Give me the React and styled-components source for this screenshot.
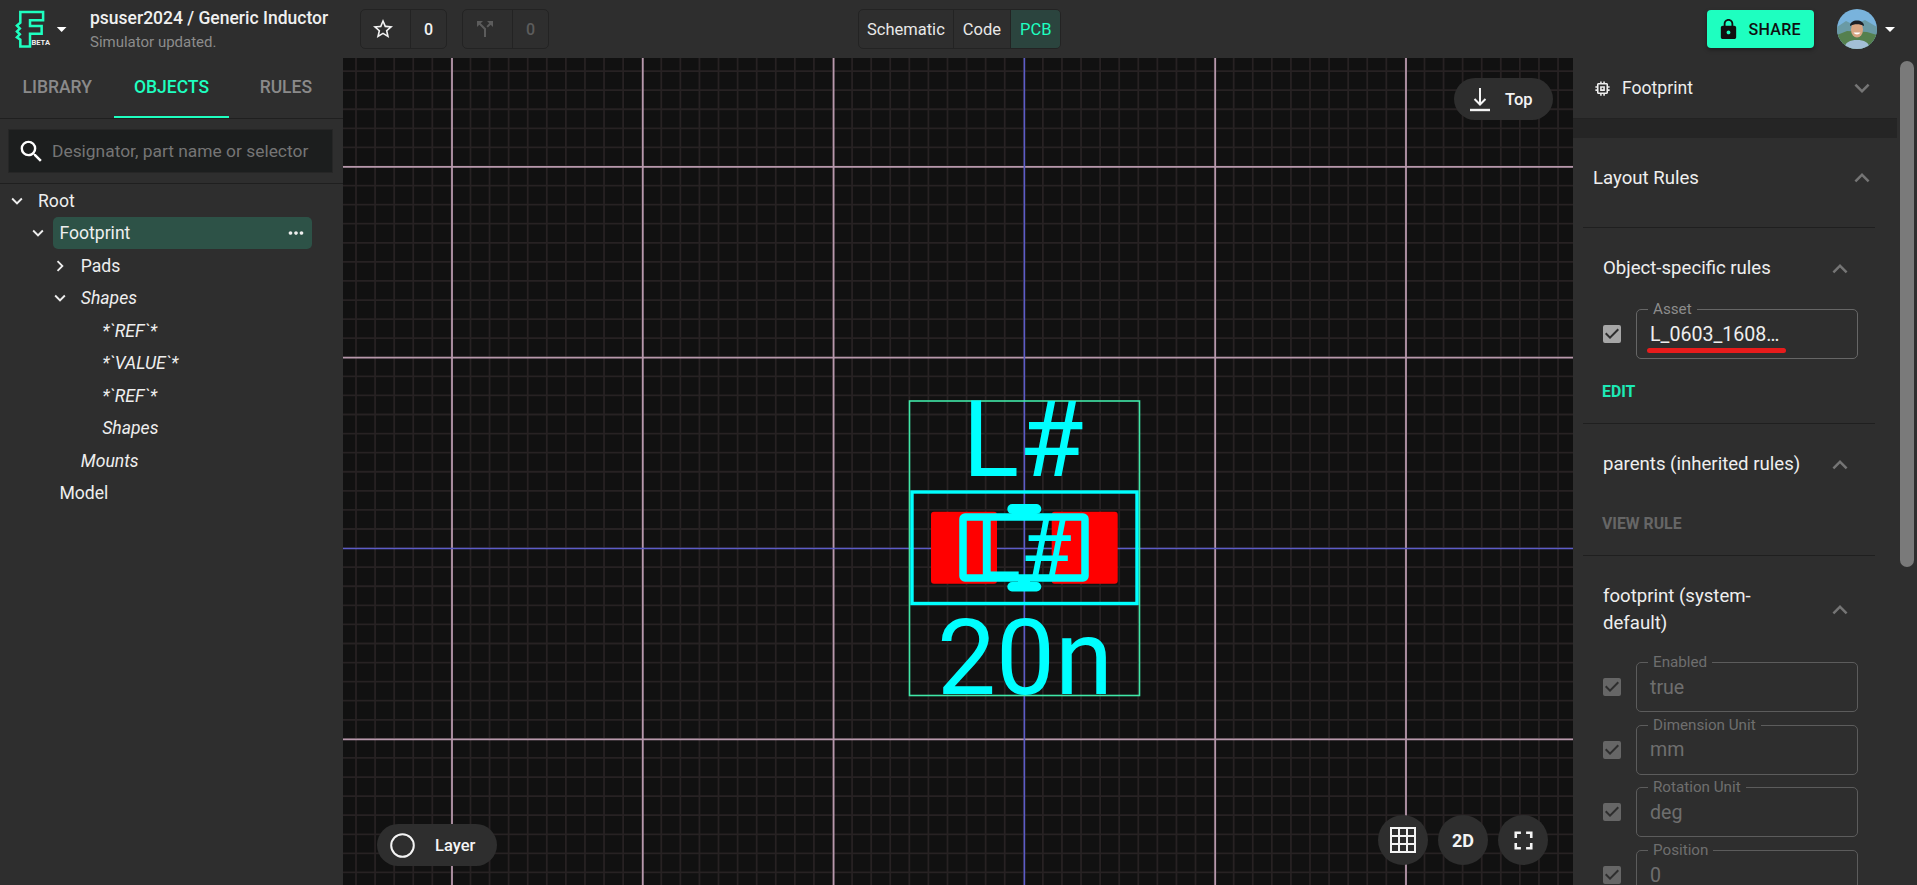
import React from 'react';
import styled, { createGlobalStyle } from 'styled-components';
import {
  MdArrowDropDown,
  MdCallSplit,
  MdCheckBox,
  MdChevronRight,
  MdExpandLess,
  MdExpandMore,
  MdFullscreen,
  MdLock,
  MdMemory,
  MdMoreHoriz,
  MdSearch,
  MdStarBorder,
} from 'react-icons/md';

const ACCENT = '#1effc0';
const PANEL = '#2e2e2e';
const LINE = '#1f1f1f';

const GlobalStyle = createGlobalStyle`
  html, body {
    margin: 0;
    height: 100%;
    background: ${PANEL};
    font-family: Roboto, "Liberation Sans", sans-serif;
    overflow: hidden;
  }
  * { box-sizing: border-box; }
`;

const Page = styled.div`
  width: 1917px;
  height: 885px;
  display: flex;
  flex-direction: column;
  overflow: hidden;
  color: #eee;
`;

/* top bar */
const Header = styled.header`
  height: 58px;
  flex: none;
  display: flex;
  align-items: center;
  background: ${PANEL};
  padding: 0 15.5px 0 15px;
`;
const LogoBox = styled.div`
  width: 58px;
  display: flex;
  align-items: center;
  color: #fff;
  svg + svg { margin-left: -4px; }
`;
const Titles = styled.div`
  width: 270px;
  margin-left: 17px;
  display: flex;
  flex-direction: column;
  gap: 4px;
`;
const Title = styled.div`
  font-size: 17.5px;
  font-weight: 500;
  line-height: 22px;
  color: #f0f0f0;
`;
const Subtitle = styled.div`
  font-size: 15px;
  line-height: 18px;
  color: #8c8c8c;
`;
const Counter = styled.div`
  width: 87px;
  height: 40px;
  margin-right: 15px;
  display: flex;
  border: 1px solid #232323;
  border-radius: 5px;
  color: ${p => (p.$off ? '#5c5c5c' : '#f2f2f2')};
`;
const CounterIcon = styled.div`
  width: 50px;
  display: flex;
  align-items: center;
  justify-content: center;
  padding-right: 5px;
  border-right: 1px solid #232323;
`;
const CounterValue = styled.div`
  flex: 1;
  display: flex;
  align-items: center;
  justify-content: center;
  font-size: 16px;
  font-weight: 500;
`;
const ViewSwitch = styled.div`
  height: 40px;
  margin-left: 294px;
  display: flex;
  border: 1px solid #232323;
  border-radius: 5px;
  overflow: hidden;
`;
const ViewTab = styled.div`
  display: flex;
  align-items: center;
  padding: 0 ${p => p.$pad}px;
  font-size: 16.5px;
  color: ${p => (p.$active ? ACCENT : '#e8e8e8')};
  background: ${p => (p.$active ? '#2b443e' : 'transparent')};
  & + & { border-left: 1px solid #232323; }
`;
const HeaderRight = styled.div`
  margin-left: auto;
  display: flex;
  align-items: center;
`;
const ShareButton = styled.button`
  width: 107px;
  height: 38px;
  display: flex;
  align-items: center;
  gap: 9px;
  padding: 0 0 0 10px;
  border: 0;
  border-radius: 4px;
  background: ${ACCENT};
  color: #101010;
  font: 500 16px Roboto, sans-serif;
  letter-spacing: 0.3px;
  box-shadow: 0 2px 4px rgba(0, 0, 0, 0.35);
`;
const AvatarBox = styled.div`
  width: 40px;
  height: 40px;
  margin-left: 23px;
  border-radius: 50%;
  overflow: hidden;
`;
const Caret = styled.div`
  display: flex;
  margin-left: 1px;
  color: #fff;
`;

/* main area */
const Main = styled.div`
  flex: 1;
  min-height: 0;
  display: flex;
`;

/* left panel */
const LeftPanel = styled.aside`
  width: 343px;
  flex: none;
  background: ${PANEL};
`;
const Tabs = styled.div`
  height: 61px;
  display: grid;
  grid-template-columns: repeat(3, 1fr);
  border-bottom: 1px solid ${LINE};
`;
const Tab = styled.div`
  display: flex;
  align-items: center;
  justify-content: center;
  height: 60px;
  font-size: 17.5px;
  font-weight: 500;
  color: ${p => (p.$active ? ACCENT : '#8a8a8a')};
  border-bottom: 2px solid ${p => (p.$active ? ACCENT : 'transparent')};
`;
const SearchWrap = styled.div`
  height: 65px;
  padding: 10px 10px 10px 8px;
  border-bottom: 1px solid ${LINE};
`;
const SearchBox = styled.div`
  height: 44px;
  display: flex;
  align-items: center;
  gap: 6px;
  padding-left: 8px;
  background: #1c1e1e;
  border: 1px solid #262626;
  color: #fff;
`;
const SearchText = styled.span`
  font-size: 17.4px;
  color: #757575;
`;
const Tree = styled.div`
  padding: 0.6px 31px 0 0;
`;
const TreeRow = styled.div`
  height: 32.5px;
  display: flex;
  align-items: center;
  padding-left: ${p => 6 + p.$depth * 21.4}px;
`;
const Toggle = styled.div`
  width: 22px;
  flex: none;
  margin-right: 4px;
  display: flex;
  color: #eee;
`;
const TreeLabel = styled.div`
  flex: 1;
  height: 32px;
  display: flex;
  align-items: center;
  justify-content: space-between;
  padding: 0 5px 0 6px;
  font-size: 17.6px;
  font-style: ${p => (p.$italic ? 'italic' : 'normal')};
  color: #eee;
  border-radius: 5px;
  background: ${p => (p.$selected ? '#2d5247' : 'transparent')};
`;

/* canvas */
const Canvas = styled.main`
  flex: 1;
  position: relative;
  overflow: hidden;
  background: #111;
`;
const Drawing = styled.svg`
  position: absolute;
  inset: 0;
  width: 100%;
  height: 100%;
`;
const FloatPill = styled.div`
  position: absolute;
  height: 42px;
  display: flex;
  align-items: center;
  border-radius: 21px;
  background: ${PANEL};
  font-size: 16.5px;
  font-weight: 500;
  color: #f4f4f4;
  left: ${p => p.$left}px;
  top: ${p => p.$top}px;
  width: ${p => p.$width}px;
  padding-left: ${p => p.$pad}px;
  gap: ${p => p.$gap}px;
`;
const RoundTools = styled.div`
  position: absolute;
  right: 25px;
  bottom: 20px;
  display: flex;
  gap: 10px;
`;
const RoundButton = styled.div`
  width: 50px;
  height: 50px;
  display: flex;
  align-items: center;
  justify-content: center;
  border-radius: 50%;
  background: ${PANEL};
  color: #f4f4f4;
  font-size: 18px;
  font-weight: 700;
`;

/* right panel */
const RightPanel = styled.aside`
  width: 324px;
  flex: none;
  overflow: hidden;
  background: ${PANEL};
`;
const FootprintHead = styled.div`
  height: 60px;
  display: flex;
  align-items: center;
  gap: 10px;
  padding: 0 20px 0 20px;
  font-size: 17.6px;
  color: #eee;
`;
const Muted = styled.div`
  height: 27px;
  display: flex;
  align-items: center;
  color: #757575;
  margin-left: ${p => (p.$auto ? 'auto' : '0')};
`;
const Band = styled.div`
  height: 20px;
  background: #252525;
  border-top: 1px solid #222;
`;
const Inner = styled.div`
  padding: 0 22px 0 10px;
`;
const LayoutHead = styled.div`
  height: 90px;
  padding: 0 0 10px 10px;
  display: flex;
  align-items: center;
  justify-content: space-between;
  font-size: 18.6px;
  color: #eee;
  border-bottom: 1px solid ${LINE};
  svg { margin-right: -2px; }
`;
const Section = styled.section`
  padding: 0 17px 0 20px;
  border-bottom: 1px solid ${LINE};
`;
const SectionHead = styled.div`
  padding: 27px 3px 25px 0;
  display: flex;
  align-items: center;
  justify-content: space-between;
`;
const SectionTitle = styled.div`
  max-width: 205px;
  font-size: 18.6px;
  line-height: 27px;
  color: #eee;
`;
const RuleList = styled.div`
  display: flex;
  flex-direction: column;
  gap: 12.7px;
  margin-top: ${p => p.$top}px;
`;
const RuleRow = styled.div`
  display: flex;
  align-items: center;
  gap: 12.5px;
  color: ${p => (p.$off ? '#666' : '#a6a6a6')};
  svg { margin-left: -3.5px; flex: none; }
`;
const Field = styled.div`
  position: relative;
  width: 222px;
  height: 50px;
  display: flex;
  align-items: center;
  padding-left: 13px;
  border: 1px solid ${p => (p.$off ? '#5c5c5c' : '#666')};
  border-radius: 5px;
  font-size: 19.6px;
  color: ${p => (p.$off ? '#6e6e6e' : '#eee')};
`;
const FieldLabel = styled.span`
  position: absolute;
  left: 11px;
  top: -10px;
  padding: 0 5px;
  background: ${PANEL};
  font-size: 15.2px;
  line-height: 18px;
  color: ${p => (p.$off ? '#6e6e6e' : '#8c8c8c')};
`;
const Scribble = styled.span`
  position: absolute;
  left: 10px;
  bottom: 5px;
  width: 139px;
  height: 5px;
  border-radius: 3px;
  background: #e81c1c;
`;
const SectionAction = styled.div`
  height: 20px;
  margin: ${p => p.$top}px 0 22px -1px;
  display: flex;
  align-items: center;
  font-size: 15.8px;
  font-weight: 700;
  color: ${p => (p.$off ? '#666' : '#1de9b6')};
`;
const ScrollRail = styled.div`
  width: 20px;
  flex: none;
  padding: 3px 3px 0;
  background: ${PANEL};
`;
const ScrollThumb = styled.div`
  height: 506px;
  border-radius: 7px;
  background: #7a7a7a;
`;

const Logo = () => (
  <svg width="40" height="40" viewBox="15 8 40 40">
    <path
      d="M21 10.5H44V19H30.5V25H42.5V33H30.5V46H20.5V39L17 36.5L20 33.5L17 30.5L20 27.5L17 24.5L20.5 21.5V10.500Z"
      fill="none"
      stroke={ACCENT}
      strokeWidth="2.600"
    />
    <text x="32" y="44" fill="#eee" fontSize="7.800" fontWeight="700" fontFamily="Roboto, sans-serif">BETA</text>
  </svg>
);

const Avatar = () => (
  <svg width="40" height="40" viewBox="0 0 40 40">
    <rect width="40" height="40" fill="#79b3dc" />
    <path d="M0 18L9 12L17 16L28 11L40 18V40H0Z" fill="#6a9aa5" />
    <path d="M0 26L10 22L30 23L40 26V40H0Z" fill="#55804e" />
    <path d="M7 40C8 33 13 31 20 31C27 31 32 33 33 40Z" fill="#a3bfd6" />
    <ellipse cx="20" cy="20.500" rx="6" ry="8" fill="#d8a684" />
    <path d="M13 17C12.500 9.500 27.500 9.500 27 17C23 14.500 17 14.500 13 17Z" fill="#1c2026" />
    <path d="M16.500 23.500C18 26 22 26 23.500 23.500Z" fill="#fff" />
  </svg>
);

const Footprint = () => {
  const step = 190.8;
  const minorX = Array.from({ length: 70 }, (_, i) => 356 + i * 19.08);
  const minorY = Array.from({ length: 46 }, (_, i) => 52 + i * 19.08);
  const majorX = [-3, -2, -1, 1, 2].map(n => 1024.4 + n * step);
  const majorY = [-2, -1, 1].map(n => 548.5 + n * step);
  return (
    <Drawing viewBox="343 58 1230 827" preserveAspectRatio="none">
      {minorX.map(x => <line key={x} x1={x} x2={x} y1="58" y2="885" stroke="#272223" strokeWidth="1.800" />)}
      {minorY.map(y => <line key={y} x1="343" x2="1573" y1={y} y2={y} stroke="#272223" strokeWidth="1.800" />)}
      {majorX.map(x => <line key={x} x1={x} x2={x} y1="58" y2="885" stroke="#b798ac" strokeWidth="1.800" />)}
      {majorY.map(y => <line key={y} x1="343" x2="1573" y1={y} y2={y} stroke="#b798ac" strokeWidth="1.800" />)}
      <line x1="343" x2="1573" y1="548.5" y2="548.5" stroke="#5c5cc8" strokeWidth="1.600" />
      <line x1="1024.4" x2="1024.4" y1="58" y2="885" stroke="#5c5cc8" strokeWidth="1.600" />

      <rect x="909.500" y="401" width="230" height="294.500" fill="none" stroke="#40e8a8" strokeWidth="1.600" />
      <rect x="931" y="511.700" width="66" height="72" rx="3" fill="#ff0000" />
      <rect x="1051.700" y="511.700" width="66" height="72" rx="3" fill="#ff0000" />
      <g fill="#00ffff" fontFamily="Roboto, sans-serif" textAnchor="middle">
        <text x="1023" y="476" fontSize="105">L#</text>
        <text x="1024" y="578" fontSize="83">L#</text>
        <text x="1025" y="694" fontSize="105">20n</text>
      </g>
      <rect x="912" y="492" width="225" height="111.500" fill="none" stroke="#00ffff" strokeWidth="3.400" />
      <rect x="963" y="517" width="122" height="61" rx="2" fill="none" stroke="#00ffff" strokeWidth="7.500" />
      <rect x="1007.300" y="504" width="34" height="10" rx="5" fill="#00ffff" />
      <rect x="1018" y="510" width="12" height="6" fill="#00ffff" />
      <rect x="1007.300" y="582" width="34" height="9.500" rx="4.700" fill="#00ffff" />
      <rect x="1018" y="578" width="12" height="6" fill="#00ffff" />
    </Drawing>
  );
};

const DownArrow = () => (
  <svg width="22" height="26" viewBox="0 0 22 26" fill="none" stroke="#f4f4f4" strokeWidth="2">
    <path d="M11 2V18M5.500 13L11 18.500L16.500 13" />
    <path d="M1 24H21" strokeWidth="2.400" />
  </svg>
);

const GridIcon = () => (
  <svg width="26" height="26" viewBox="0 0 26 26" fill="none" stroke="#f4f4f4" strokeWidth="2">
    <rect x="1" y="1" width="24" height="24" />
    <path d="M9 1V25M17 1V25M1 9H25M1 17H25" />
  </svg>
);

const treeRows = [
  { label: 'Root', depth: 0, open: true },
  { label: 'Footprint', depth: 1, open: true, selected: true },
  { label: 'Pads', depth: 2, open: false },
  { label: 'Shapes', depth: 2, open: true, italic: true },
  { label: '*`REF`*', depth: 3, italic: true },
  { label: '*`VALUE`*', depth: 3, italic: true },
  { label: '*`REF`*', depth: 3, italic: true },
  { label: 'Shapes', depth: 3, italic: true },
  { label: 'Mounts', depth: 2, italic: true },
  { label: 'Model', depth: 1 },
];

const defaults = [
  { label: 'Enabled', value: 'true' },
  { label: 'Dimension Unit', value: 'mm' },
  { label: 'Rotation Unit', value: 'deg' },
  { label: 'Position', value: '0' },
];

const App = () => (
  <Page>
    <GlobalStyle />
    <Header>
      <LogoBox>
        <Logo />
        <MdArrowDropDown size={24} />
      </LogoBox>
      <Titles>
        <Title>psuser2024 / Generic Inductor</Title>
        <Subtitle>Simulator updated.</Subtitle>
      </Titles>
      <Counter>
        <CounterIcon><MdStarBorder size={24} /></CounterIcon>
        <CounterValue>0</CounterValue>
      </Counter>
      <Counter $off>
        <CounterIcon><MdCallSplit size={24} /></CounterIcon>
        <CounterValue>0</CounterValue>
      </Counter>
      <ViewSwitch>
        <ViewTab $pad={8}>Schematic</ViewTab>
        <ViewTab $pad={9}>Code</ViewTab>
        <ViewTab $pad={9} $active>PCB</ViewTab>
      </ViewSwitch>
      <HeaderRight>
        <ShareButton><MdLock size={23} />SHARE</ShareButton>
        <AvatarBox><Avatar /></AvatarBox>
        <Caret><MdArrowDropDown size={24} /></Caret>
      </HeaderRight>
    </Header>
    <Main>
      <LeftPanel>
        <Tabs>
          <Tab>LIBRARY</Tab>
          <Tab $active>OBJECTS</Tab>
          <Tab>RULES</Tab>
        </Tabs>
        <SearchWrap>
          <SearchBox>
            <MdSearch size={29} />
            <SearchText>Designator, part name or selector</SearchText>
          </SearchBox>
        </SearchWrap>
        <Tree>
          {treeRows.map((row, index) => (
            <TreeRow key={index} $depth={row.depth}>
              <Toggle>
                {row.open === true && <MdExpandMore size={22} />}
                {row.open === false && <MdChevronRight size={22} />}
              </Toggle>
              <TreeLabel $italic={row.italic} $selected={row.selected}>
                {row.label}
                {row.selected && <MdMoreHoriz size={22} />}
              </TreeLabel>
            </TreeRow>
          ))}
        </Tree>
      </LeftPanel>

      <Canvas>
        <Footprint />
        <FloatPill $left={1111} $top={20} $width={99} $pad={15} $gap={14}><DownArrow />Top</FloatPill>
        <FloatPill $left={34} $top={766} $width={120} $pad={13} $gap={20}>
          <svg width="25" height="25" viewBox="0 0 25 25" fill="none" stroke="#f4f4f4" strokeWidth="2">
            <circle cx="12.500" cy="12.500" r="11.300" />
          </svg>
          Layer
        </FloatPill>
        <RoundTools>
          <RoundButton><GridIcon /></RoundButton>
          <RoundButton>2D</RoundButton>
          <RoundButton><MdFullscreen size={31} /></RoundButton>
        </RoundTools>
      </Canvas>

      <RightPanel>
        <FootprintHead>
          <MdMemory size={19} />
          Footprint
          <Muted $auto><MdExpandMore size={30} /></Muted>
        </FootprintHead>
        <Band />
        <Inner>
          <LayoutHead>
            Layout Rules
            <Muted><MdExpandLess size={30} /></Muted>
          </LayoutHead>
          <Section>
            <SectionHead>
              <SectionTitle>Object-specific rules</SectionTitle>
              <Muted><MdExpandLess size={30} /></Muted>
            </SectionHead>
            <RuleList $top={2}>
              <RuleRow>
                <MdCheckBox size={24} />
                <Field>
                  <FieldLabel>Asset</FieldLabel>
                  L_0603_1608…
                  <Scribble />
                </Field>
              </RuleRow>
            </RuleList>
            <SectionAction $top={22}>EDIT</SectionAction>
          </Section>
          <Section>
            <SectionHead>
              <SectionTitle>parents (inherited rules)</SectionTitle>
              <Muted><MdExpandLess size={30} /></Muted>
            </SectionHead>
            <SectionAction $top={10} $off>VIEW RULE</SectionAction>
          </Section>
          <Section>
            <SectionHead>
              <SectionTitle>footprint (system-default)</SectionTitle>
              <Muted><MdExpandLess size={30} /></Muted>
            </SectionHead>
            <RuleList $top={0}>
              {defaults.map(item => (
                <RuleRow key={item.label} $off>
                  <MdCheckBox size={24} />
                  <Field $off>
                    <FieldLabel $off>{item.label}</FieldLabel>
                    {item.value}
                  </Field>
                </RuleRow>
              ))}
            </RuleList>
          </Section>
        </Inner>
      </RightPanel>
      <ScrollRail><ScrollThumb /></ScrollRail>
    </Main>
  </Page>
);

export default App;
